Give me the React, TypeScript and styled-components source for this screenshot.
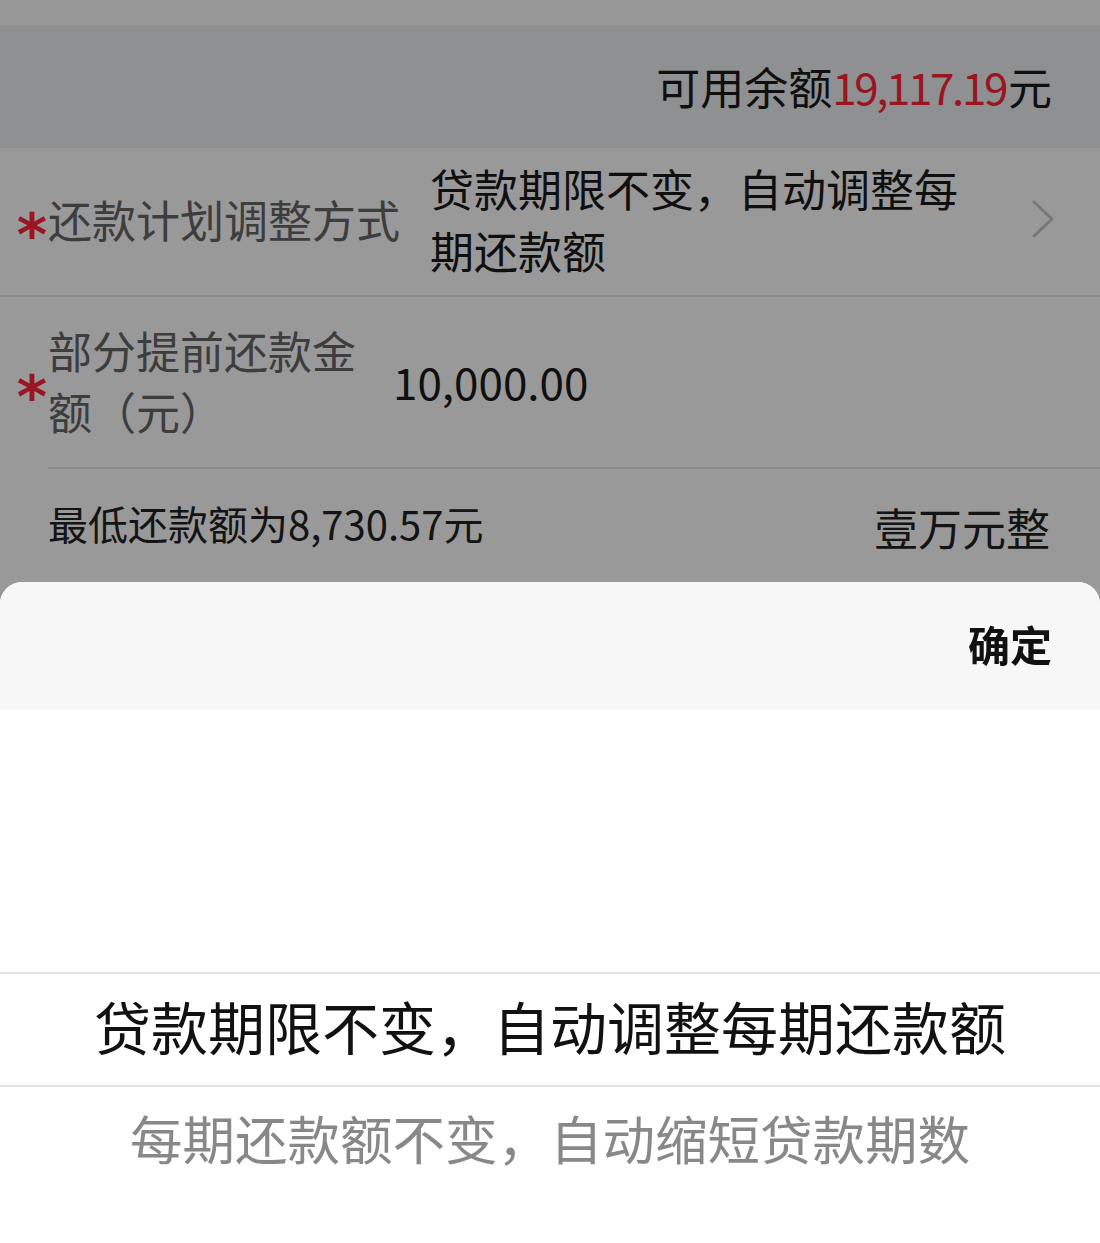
import React from "react";
import styled, { createGlobalStyle } from "styled-components";

const GlobalStyle = createGlobalStyle`
  html, body { margin: 0; padding: 0; }
  body {
    font-family: "PingFang SC", "Noto Sans CJK SC", "Noto Sans", sans-serif;
    background: #ffffff;
    overflow: hidden;
  }
  * { box-sizing: border-box; }
`;

const Page = styled.div`
  min-height: 100vh;
  background: #ffffff;
  display: flex;
  flex-direction: column;
`;

const TopStrip = styled.div`
  height: 25px;
  background: #fdfdfd;
`;

const BalanceBar = styled.div`
  height: 123px;
  background: #eef0f3;
  display: flex;
  align-items: center;
  justify-content: flex-end;
  padding: 0 48px 2px 0;
  font-size: 44px;
  line-height: 1;
  color: #1a1a1a;
`;

const Amount = styled.span`
  color: #ff2438;
  letter-spacing: -2.4px;
  margin-right: 2px;
`;

const FormRow = styled.div<{ $height: number; $inset?: boolean }>`
  position: relative;
  display: flex;
  align-items: center;
  height: ${(p) => p.$height}px;
  padding: 0 45px 5px 16px;
  border-bottom: ${(p) => (p.$inset ? "none" : "2px solid #e6e6e6")};
  &::after {
    content: "";
    display: ${(p) => (p.$inset ? "block" : "none")};
    position: absolute;
    left: 48px;
    right: 0;
    bottom: 0;
    height: 2px;
    background: #e6e6e6;
  }
`;

const Star = styled.span`
  width: 32px;
  flex: none;
  text-align: center;
  font-family: "DejaVu Sans", sans-serif;
  font-size: 58px;
  font-weight: bold;
  line-height: 1;
  color: #ff2438;
  transform: translateY(16px);
`;

const Label = styled.div<{ $width: number }>`
  width: ${(p) => p.$width}px;
  flex: none;
  font-size: 44px;
  line-height: 61px;
  color: #666666;
`;

const Value = styled.div`
  flex: 1;
  margin-left: 28px;
  font-size: 44px;
  line-height: 62px;
  color: #1a1a1a;
`;

const Chevron = styled.svg`
  flex: none;
  width: 24px;
  height: 40px;
  margin-left: 36px;
`;

const HintRow = styled.div`
  display: flex;
  align-items: center;
  justify-content: space-between;
  height: 115px;
  padding: 0 50px 8px 48px;
  color: #222222;
`;

const HintText = styled.span`
  font-size: 40px;
  line-height: 1;
`;

const Capital = styled.span`
  font-size: 44px;
  line-height: 1;
  padding-top: 8px;
`;

const Mask = styled.div`
  position: fixed;
  inset: 0;
  background: rgba(0, 0, 0, 0.4);
`;

const Sheet = styled.div`
  position: fixed;
  left: 0;
  right: 0;
  top: 582px;
  bottom: 0;
  background: #ffffff;
  border-radius: 22px 22px 0 0;
  overflow: hidden;
  display: flex;
  flex-direction: column;
`;

const SheetHeader = styled.div`
  height: 128px;
  flex: none;
  background: #f7f7f7;
  display: flex;
  align-items: center;
  justify-content: flex-end;
  padding: 0 48px 4px 0;
`;

const Confirm = styled.button`
  border: none;
  background: none;
  padding: 0;
  font-family: inherit;
  font-size: 42px;
  font-weight: bold;
  line-height: 1;
  color: #111111;
`;

const Picker = styled.div`
  display: flex;
  flex-direction: column;
  padding-top: 262px;
`;

const PickerItem = styled.div<{ $active?: boolean }>`
  height: ${(p) => (p.$active ? 115 : 113)}px;
  display: flex;
  align-items: center;
  justify-content: center;
  padding-bottom: ${(p) => (p.$active ? 8 : 12)}px;
  font-size: ${(p) => (p.$active ? 57 : 52.5)}px;
  line-height: 1;
  color: ${(p) => (p.$active ? "#111111" : "#888888")};
  border-top: ${(p) => (p.$active ? "2px solid #e2e2e2" : "none")};
  border-bottom: ${(p) => (p.$active ? "2px solid #e2e2e2" : "none")};
`;

export default function App() {
  return (
    <>
      <GlobalStyle />
      <Page>
        <TopStrip />
        <BalanceBar>
          可用余额<Amount>19,117.19</Amount>元
        </BalanceBar>
        <FormRow $height={149}>
          <Star>*</Star>
          <Label $width={354}>还款计划调整方式</Label>
          <Value>贷款期限不变，自动调整每期还款额</Value>
          <Chevron viewBox="0 0 24 40" fill="none">
            <path d="M3 3 L21 20 L3 37" stroke="#c6c6c6" strokeWidth="2.8" strokeLinecap="round" strokeLinejoin="round" />
          </Chevron>
        </FormRow>
        <FormRow $height={172} $inset>
          <Star>*</Star>
          <Label $width={317}>部分提前还款金额（元）</Label>
          <Value>10,000.00</Value>
        </FormRow>
        <HintRow>
          <HintText>最低还款额为8,730.57元</HintText>
          <Capital>壹万元整</Capital>
        </HintRow>
      </Page>
      <Mask />
      <Sheet>
        <SheetHeader>
          <Confirm>确定</Confirm>
        </SheetHeader>
        <Picker>
          <PickerItem $active>贷款期限不变，自动调整每期还款额</PickerItem>
          <PickerItem>每期还款额不变，自动缩短贷款期数</PickerItem>
        </Picker>
      </Sheet>
    </>
  );
}
